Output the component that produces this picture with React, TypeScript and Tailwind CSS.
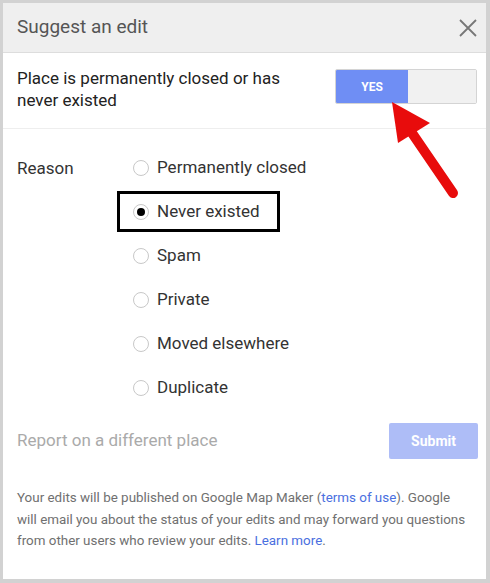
import { useState } from 'react';

const reasons = [
    'Permanently closed',
    'Never existed',
    'Spam',
    'Private',
    'Moved elsewhere',
    'Duplicate',
];

function Radio({ checked }: { checked: boolean }) {
    return (
        <span className="w-[16px] h-[16px] rounded-full border border-[#c8c8c8] bg-white flex items-center justify-center shrink-0">
            {checked && <span className="w-[8px] h-[8px] rounded-full bg-black" />}
        </span>
    );
}

export default function App() {
    const [selected, setSelected] = useState('Never existed');

    return (
        <div className="relative w-[490px] h-[583px] bg-[#d2d2d2] pl-[3px] pt-[3px] pr-[4px] pb-[4px] font-['Roboto',sans-serif]">
            <div className="h-full bg-white flex flex-col">
                {/* header */}
                <div className="h-[50px] bg-[#efefef] border-b border-[#dddddd] flex items-center justify-between pl-[14px] pr-[8px] shrink-0">
                    <span className="text-[19px] text-[#555555]">Suggest an edit</span>
                    <svg width="20" height="20" viewBox="0 0 20 20" className="text-[#777777]">
                        <path d="M2 2 L18 18 M18 2 L2 18" stroke="currentColor" strokeWidth="1.8" fill="none" />
                    </svg>
                </div>

                {/* closed toggle */}
                <div className="flex justify-between pl-[14px] pr-[9px] pt-[14px] pb-[17px] border-b border-[#eeeeee]">
                    <p className="text-[17px] leading-[22px] text-[#222222] w-[290px]">
                        Place is permanently closed or has never existed
                    </p>
                    <div className="flex w-[142px] h-[35px] mt-[2px] border border-[#d4d4d4] rounded-[2px] overflow-hidden">
                        <div className="w-[72px] bg-[#6f8ef4] flex items-center justify-center text-white text-[12px] font-bold">
                            YES
                        </div>
                        <div className="flex-1 bg-[#f1f1f1]" />
                    </div>
                </div>

                {/* reasons */}
                <div className="flex pl-[14px] pt-[28px]">
                    <span className="w-[116px] text-[17px] leading-[22px] text-[#333333]">Reason</span>
                    <div className="flex flex-col gap-[22px]">
                        {reasons.map((r) => (
                            <label
                                key={r}
                                onClick={() => setSelected(r)}
                                className="relative flex items-center gap-[8px] h-[22px] text-[17px] text-[#333333] cursor-pointer"
                            >
                                <Radio checked={selected === r} />
                                {r}
                                {r === 'Never existed' && (
                                    <span className="absolute left-[-16px] top-[-10px] w-[163px] h-[41px] border-[3px] border-black" />
                                )}
                            </label>
                        ))}
                    </div>
                </div>

                {/* report + submit */}
                <div className="flex items-center justify-between pl-[14px] pr-[8px] mt-[24px]">
                    <span className="text-[17px] text-[#aaaaaa]">Report on a different place</span>
                    <button className="w-[89px] h-[36px] rounded-[2px] bg-[#aebdf7] text-white text-[14px] font-bold">
                        Submit
                    </button>
                </div>

                {/* footer */}
                <p className="pl-[14px] pr-[20px] mt-[28px] text-[13.4px] leading-[21.5px] text-[#707070]">
                    Your edits will be published on Google Map Maker (<span className="text-[#4a6fe0]">terms of use</span>). Google will email you about the status of your edits and may forward you questions from other users who review your edits. <span className="text-[#4a6fe0]">Learn more</span>.
                </p>
            </div>

            {/* annotation arrow */}
            <svg className="absolute left-[380px] top-[95px]" width="90" height="105" viewBox="0 0 90 105">
                <polygon points="12,7 18,48 50,28" fill="#e80c0c" />
                <path d="M32 38 L73 98" stroke="#e80c0c" strokeWidth="10" strokeLinecap="round" />
            </svg>
        </div>
    );
}
